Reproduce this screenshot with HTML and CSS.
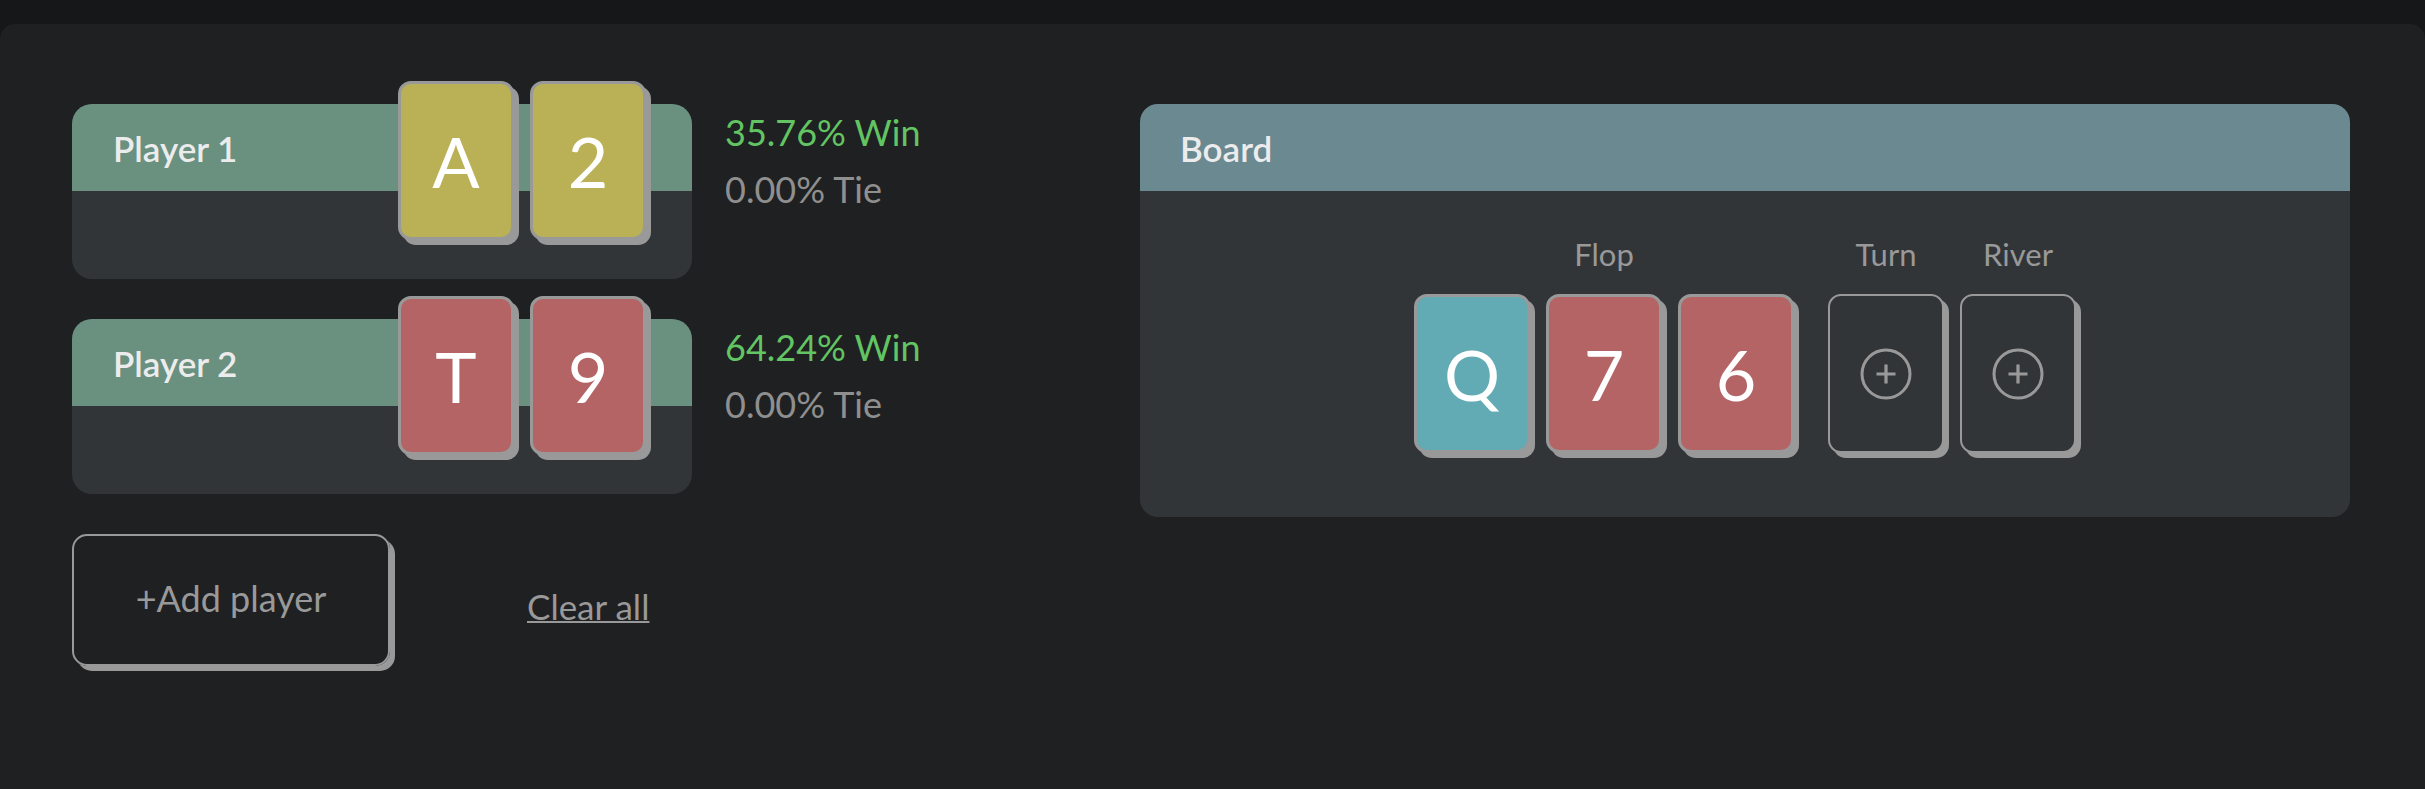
FILE: index.html
```html
<!DOCTYPE html>
<html lang="en">
<head>
<meta charset="utf-8">
<title>Equity Calculator</title>
<link rel="stylesheet" href="styles.css">
</head>
<body>
<main class="panel">
  <section class="players">
    <div class="player-row">
      <div class="player">
        <div class="player-head">Player 1</div>
        <div class="player-body"></div>
        <div class="hole">
          <div class="card yellow">A</div>
          <div class="card yellow">2</div>
        </div>
      </div>
      <div class="stats">
        <div class="win">35.76% Win</div>
        <div class="tie">0.00% Tie</div>
      </div>
    </div>
    <div class="player-row">
      <div class="player">
        <div class="player-head">Player 2</div>
        <div class="player-body"></div>
        <div class="hole">
          <div class="card red">T</div>
          <div class="card red">9</div>
        </div>
      </div>
      <div class="stats">
        <div class="win">64.24% Win</div>
        <div class="tie">0.00% Tie</div>
      </div>
    </div>
    <div class="actions">
      <button class="add-btn">+Add player</button>
      <a class="clear" href="#">Clear all</a>
    </div>
  </section>

  <section class="board">
    <div class="board-head">Board</div>
    <div class="board-body">
      <div class="street flop">
        <div class="street-label">Flop</div>
        <div class="street-cards">
          <div class="card teal">Q</div>
          <div class="card red">7</div>
          <div class="card red">6</div>
        </div>
      </div>
      <div class="street turn">
        <div class="street-label">Turn</div>
        <div class="street-cards">
          <div class="card empty">
            <svg width="54" height="54" viewBox="0 0 54 54"><circle cx="27" cy="27" r="24" fill="none" stroke="#999" stroke-width="3"/><path d="M27 17.5v19M17.5 27h19" stroke="#999" stroke-width="3.2" fill="none"/></svg>
          </div>
        </div>
      </div>
      <div class="street river">
        <div class="street-label">River</div>
        <div class="street-cards">
          <div class="card empty">
            <svg width="54" height="54" viewBox="0 0 54 54"><circle cx="27" cy="27" r="24" fill="none" stroke="#999" stroke-width="3"/><path d="M27 17.5v19M17.5 27h19" stroke="#999" stroke-width="3.2" fill="none"/></svg>
          </div>
        </div>
      </div>
    </div>
  </section>
</main>
</body>
</html>
```

FILE: styles.css
```css
* { box-sizing: border-box; }

html, body {
  margin: 0;
  padding: 0;
  background: #161719;
  font-family: Lato, "Open Sans", sans-serif;
  overflow: hidden;
}

.panel {
  margin-top: 24px;
  min-height: 765px;
  background: #1f2022;
  border-radius: 15px 15px 0 0;
  padding: 80px 75px 0 72px;
  display: flex;
  justify-content: space-between;
  align-items: flex-start;
}

.players {
  display: flex;
  flex-direction: column;
}

.player-row {
  display: flex;
  gap: 33px;
  margin-bottom: 40px;
}

.player {
  position: relative;
  width: 620px;
  height: 175px;
  border-radius: 20px;
  background: #323538;
}

.player-head {
  height: 87px;
  background: #6a9080;
  border-radius: 20px 20px 0 0;
  display: flex;
  align-items: center;
  padding-left: 41px;
  color: #ececec;
  font-size: 35px;
  font-weight: 600;
}

.hole {
  position: absolute;
  right: 46px;
  top: -23px;
  display: flex;
  gap: 16px;
}

.card {
  width: 116px;
  height: 159px;
  border: 3px solid #999;
  border-radius: 13px;
  box-shadow: 5px 5px 0 #999;
  display: flex;
  align-items: center;
  justify-content: center;
  color: #fff;
  font-size: 70px;
  line-height: 1;
}

.yellow { background: #bab156; }
.red { background: #b46464; }
.teal { background: #62aab4; }

.card.empty {
  background: #323538;
  border-width: 2px;
}

.stats {
  font-size: 36px;
  line-height: 57px;
}

.win { color: #62c462; }
.tie { color: #8f8f8f; }

.actions {
  display: flex;
  align-items: center;
}

.add-btn {
  width: 318px;
  height: 132px;
  background: transparent;
  border: 2px solid #999;
  border-radius: 15px;
  box-shadow: 5px 5px 0 #999;
  color: #999;
  font-family: Lato, "Open Sans", sans-serif;
  font-size: 36px;
  padding: 0 0 5px;
}

.clear {
  margin-left: 137px;
  margin-top: 11px;
  color: #999;
  font-size: 35px;
  text-decoration: underline;
  text-decoration-thickness: 2px;
}

.board {
  width: 1210px;
  height: 413px;
  border-radius: 18px;
  background: #323538;
}

.board-head {
  height: 87px;
  background: #6a8991;
  border-radius: 18px 18px 0 0;
  display: flex;
  align-items: center;
  padding-left: 40px;
  color: #ececec;
  font-size: 35px;
  font-weight: 600;
}

.board-body {
  display: flex;
  justify-content: center;
  padding-top: 45px;
}

.street {
  display: flex;
  flex-direction: column;
  align-items: center;
}

.street-label {
  color: #999;
  font-size: 31px;
  line-height: 37px;
  margin-bottom: 21px;
}

.street-cards {
  display: flex;
  gap: 16px;
}

.turn { margin-left: 34px; }
.river { margin-left: 16px; }
```
